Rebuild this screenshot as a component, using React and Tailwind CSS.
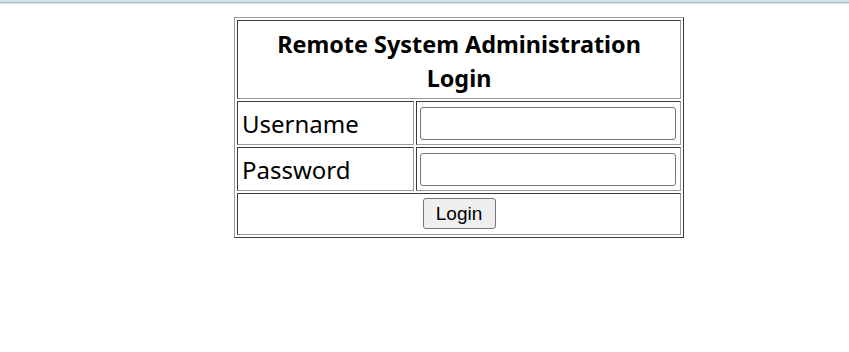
import React from "react";

export default function App() {
  const outer = "border border-t-[#9a9a9a] border-l-[#9a9a9a] border-b-[#3a3a3a] border-r-[#3a3a3a]";
  const cell = "border border-t-[#3a3a3a] border-l-[#3a3a3a] border-b-[#9a9a9a] border-r-[#9a9a9a]";
  return (
    <div className="w-[849px] h-[352px] bg-white" style={{ fontFamily: '"Noto Sans", sans-serif' }}>
      <div className="h-[4px] flex flex-col">
        <div className="h-[2px] bg-[#d3e3e8]" />
        <div className="h-[1px] bg-[#a7bbc1]" />
        <div className="h-[1px] bg-[#dde9ec]" />
      </div>
      <table className={`ml-[234px] mt-[13px] w-[450px] border-separate border-spacing-[2px] ${outer}`}>
        <tbody>
          <tr>
            <th colSpan={2} className={`${cell} h-[79px] p-0 pt-[2px] text-center text-[23.4px] font-bold leading-[34px] text-black`}>
              Remote System Administration
              <br />
              Login
            </th>
          </tr>
          <tr>
            <td className={`${cell} h-[44px] w-[177px] pl-[4px] py-0 text-[24px] leading-[33px] text-black`}>Username</td>
            <td className={`${cell} h-[44px] p-0 pl-[3px]`}>
              <input type="text" className="block w-[256px] h-[33px] border border-[#767676] rounded-[3px] bg-white outline-none" />
            </td>
          </tr>
          <tr>
            <td className={`${cell} h-[44px] w-[177px] pl-[4px] py-0 text-[24px] leading-[33px] text-black`}>Password</td>
            <td className={`${cell} h-[44px] p-0 pl-[3px]`}>
              <input type="password" className="block w-[256px] h-[33px] border border-[#767676] rounded-[3px] bg-white outline-none" />
            </td>
          </tr>
          <tr>
            <td colSpan={2} className={`${cell} h-[42px] p-0 pb-[2px] text-center`}>
              <button
                type="button"
                className="inline-block w-[73px] h-[31px] border border-[#767676] rounded-[3px] bg-[#efefef] text-[19px] leading-none text-black align-middle"
                style={{ fontFamily: '"Liberation Sans", Arial, sans-serif' }}
              >
                Login
              </button>
            </td>
          </tr>
        </tbody>
      </table>
    </div>
  );
}
